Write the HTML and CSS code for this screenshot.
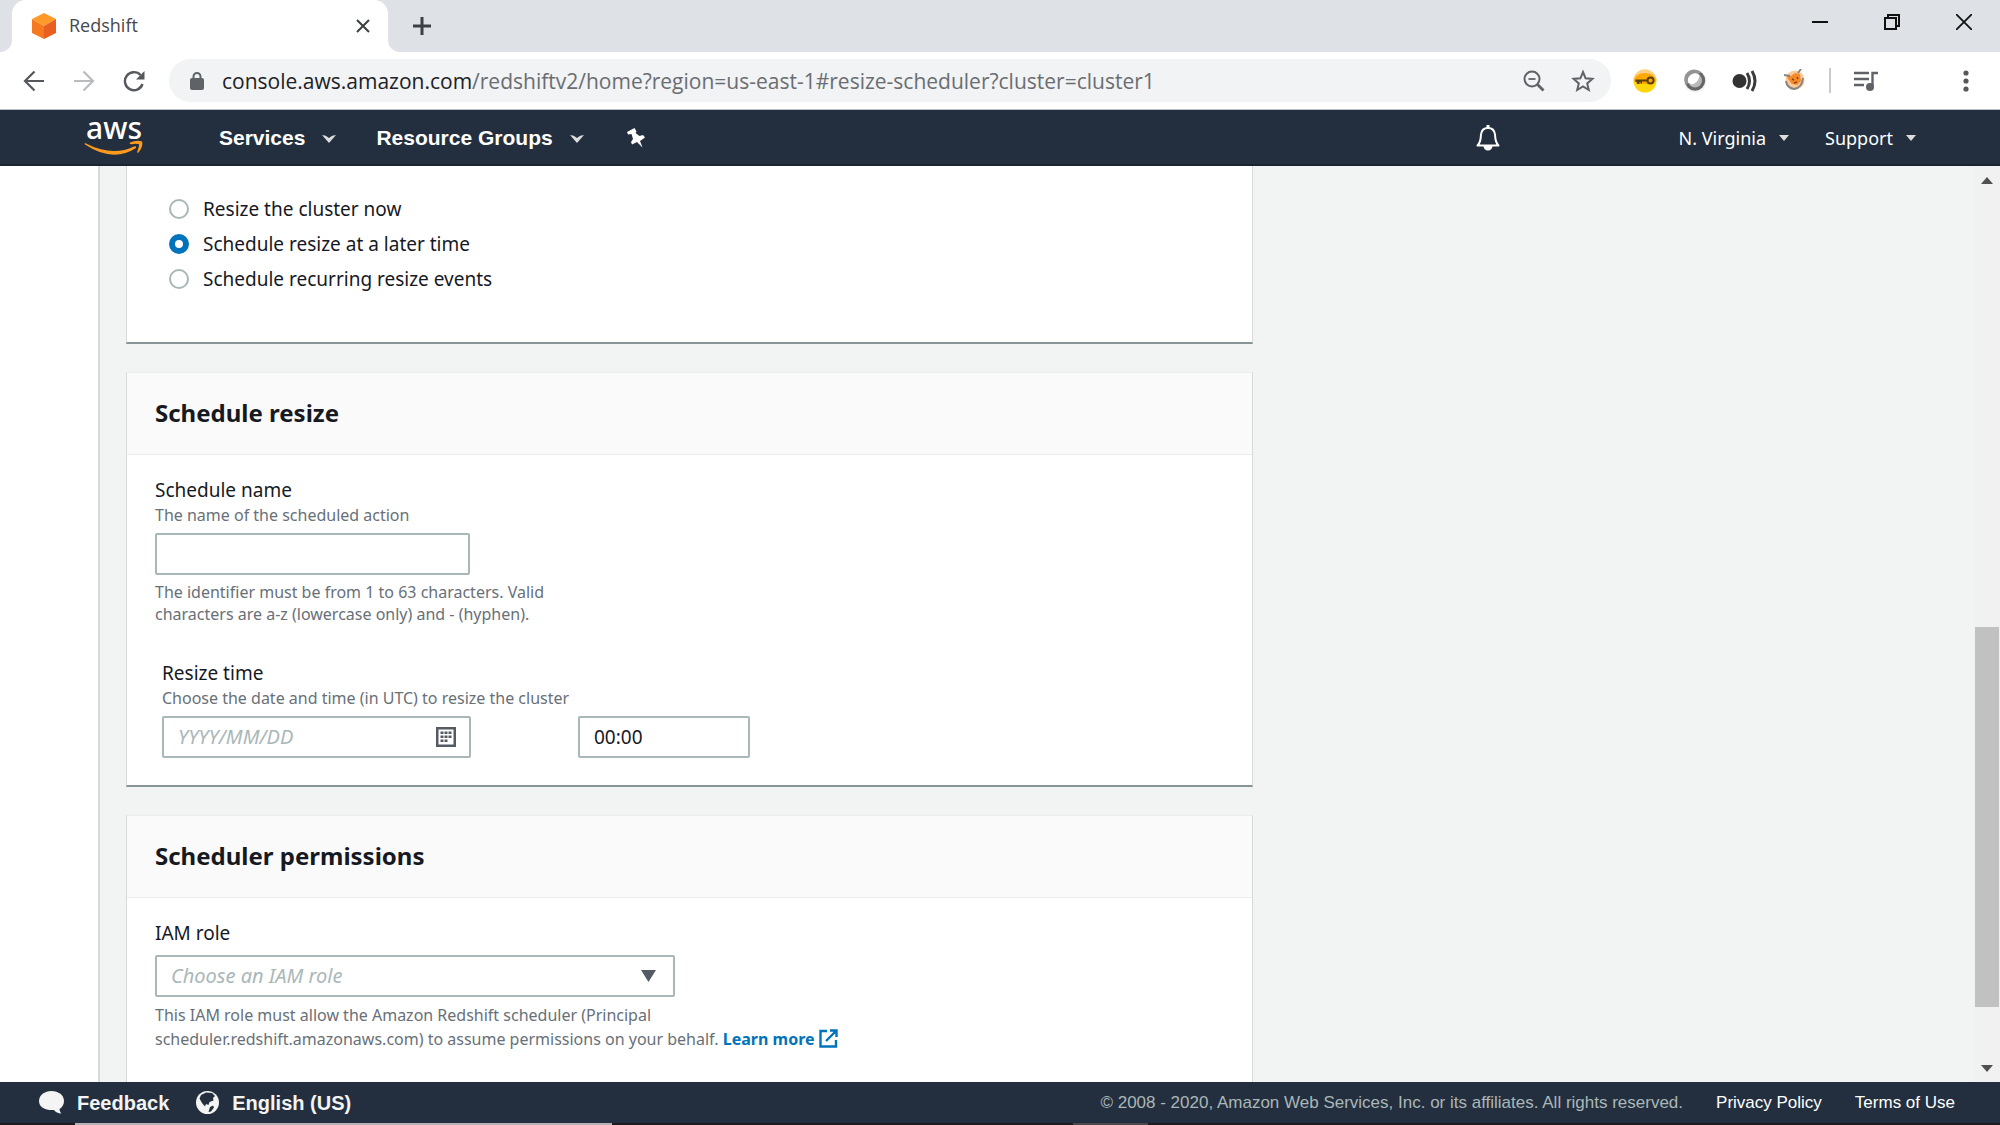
FILE: index.html
```html
<!DOCTYPE html>
<html lang="en">
<head>
<meta charset="utf-8">
<title>Redshift</title>
<link rel="stylesheet" href="styles.css">
</head>
<body>
<div class="tabstrip">
  <div class="tab-edge"></div>
  <div class="tab">
    <svg class="favicon" width="26" height="26" viewBox="0 0 26 26"><path fill="#ff9a28" d="M13 0l12 6-12 7L1 6z"/><path fill="#f4791f" d="M1 6l12 7v13L1 20z"/><path fill="#e95f1f" d="M25 6l-12 7v13l12-6z"/></svg>
    <span class="tab-title">Redshift</span>
    <button class="icon-btn" aria-label="Close tab"><svg width="14" height="14" viewBox="0 0 14 14" fill="none" stroke="#3c4043" stroke-width="2"><path d="M1 1l12 12M13 1L1 13"/></svg></button>
  </div>
  <div class="tab-rest">
    <button class="icon-btn new-tab" aria-label="New tab"><svg width="18" height="18" viewBox="0 0 18 18" fill="none" stroke="#3c4043" stroke-width="3"><path d="M9 0v18M0 9h18"/></svg></button>
    <div class="window-controls">
      <button class="icon-btn" aria-label="Minimize"><svg width="16" height="16" viewBox="0 0 16 16"><path stroke="#111" stroke-width="2" d="M0 8h16"/></svg></button>
      <button class="icon-btn" aria-label="Restore"><svg width="16" height="16" viewBox="0 0 16 16" fill="none" stroke="#111" stroke-width="2"><path d="M1 4h11v11H1zM4 4V1h11v11h-3"/></svg></button>
      <button class="icon-btn" aria-label="Close window"><svg width="16" height="16" viewBox="0 0 16 16" stroke="#111" stroke-width="1.8"><path d="M0 0l16 16M16 0L0 16"/></svg></button>
    </div>
  </div>
</div>

<div class="toolbar">
  <button class="icon-btn" aria-label="Back"><svg width="22" height="22" viewBox="0 0 22 22" fill="none" stroke="#55585c" stroke-width="2.2"><path d="M21 11H2M11.500 1.500L2 11l9.500 9.500"/></svg></button>
  <button class="icon-btn" aria-label="Forward"><svg width="22" height="22" viewBox="0 0 22 22" fill="none" stroke="#b9bbbe" stroke-width="2.200"><path d="M1 11h19M10.500 1.500L20 11l-9.500 9.500"/></svg></button>
  <button class="icon-btn" aria-label="Reload"><svg width="22" height="22" viewBox="0 0 22 22"><path fill="none" stroke="#55585c" stroke-width="2.400" d="M19.500 14A9 9 0 1 1 17.500 5"/><path fill="#55585c" d="M21.500 1v8.500H13z"/></svg></button>
  <div class="omnibox">
    <svg width="14" height="18" viewBox="0 0 14 18"><rect x="0" y="6" width="14" height="12" rx="2" fill="#5f6368"/><path d="M3.500 7V4.500a3.500 3.500 0 0 1 7 0V7" fill="none" stroke="#5f6368" stroke-width="2"/></svg>
    <div class="url"><span class="url-host">console.aws.amazon.com</span>/redshiftv2/home?region=us-east-1#resize-scheduler?cluster=cluster1</div>
    <button class="icon-btn" aria-label="Zoom"><svg width="22" height="22" viewBox="0 0 22 22" fill="none" stroke="#5f6368"><circle cx="9" cy="9" r="7.500" stroke-width="2"/><path stroke-width="2.800" d="M14.500 14.500l6 6"/><path stroke-width="1.800" d="M5.500 9h7"/></svg></button>
    <button class="icon-btn" aria-label="Bookmark"><svg width="24" height="24" viewBox="0 0 24 24" fill="none" stroke="#5f6368" stroke-width="2"><path d="M12 3l2.600 6.300 6.800.6-5.200 4.500 1.600 6.600L12 17.500 6.200 21l1.600-6.600L2.600 9.900l6.800-.6z"/></svg></button>
  </div>
  <div class="extensions">
    <button class="icon-btn" aria-label="Key extension"><svg width="24" height="24" viewBox="0 0 24 24"><circle cx="12" cy="12" r="11.500" fill="#ffd60a"/><path d="M.5 12a11.500 11.500 0 0 1 23 0z" fill="#fdd08a"/><path d="M1 12a11 8 0 0 1 22 0l-3 3H4z" fill="#fba905"/><circle cx="17.500" cy="11.500" r="3" fill="none" stroke="#5a4109" stroke-width="2"/><path d="M14 10.500v2H9v2H7.500v-1.500h-1V15H4v-2H2.500v-2.500z" fill="#5a4109"/></svg></button>
    <button class="icon-btn" aria-label="Ring extension"><svg width="24" height="24" viewBox="0 0 24 24"><circle cx="12" cy="12" r="11.500" fill="#f4f4f4"/><circle cx="12" cy="11.500" r="10.200" fill="#666"/><path d="M3 16A10 10 0 0 1 18 3z" fill="#949494"/><circle cx="12" cy="11.500" r="7" fill="#b9b9b9"/><path d="M5.500 14A7 7 0 0 1 16.500 6q-.5 7-7 9.500z" fill="#fff"/></svg></button>
    <button class="icon-btn" aria-label="Sound extension"><svg width="26" height="22" viewBox="0 0 26 22" fill="none" stroke="#3b3b3b" stroke-width="3"><circle cx="7.500" cy="11" r="7" fill="#333" stroke="none"/><path d="M15 3q5 8 0 16M20 1q6 10 0 20"/></svg></button>
    <button class="icon-btn" aria-label="Fox extension"><svg width="24" height="24" viewBox="0 0 24 24"><circle cx="12" cy="11" r="9.500" fill="#fcc99a"/><path fill="#f68a2a" d="M4 7l4 0 4-3 5 1 1 7-4 4-5-1-4-5z"/><path d="M1 6l6 1M15 4l3-4M3 12q1 7 8 8 8-1 9-11" fill="none" stroke="#858585" stroke-width="2"/><path d="M9 10l2 1M14 8l1 2M11 14l3-1" stroke="#8c4412" stroke-width="1.500"/></svg></button>
  </div>
  <div class="toolbar-divider"></div>
  <button class="icon-btn" aria-label="Media controls"><svg width="26" height="22" viewBox="0 0 26 22" fill="none" stroke="#5f6368" stroke-width="2.400"><path d="M1 3h15M1 9h15M1 15h10M19.500 17V3H25"/><circle cx="17" cy="17" r="4" fill="#5f6368" stroke="none"/></svg></button>
  <button class="icon-btn browser-menu" aria-label="Browser menu"><svg width="6" height="22" viewBox="0 0 6 22" fill="#55585c"><circle cx="3" cy="3" r="2.600"/><circle cx="3" cy="11" r="2.600"/><circle cx="3" cy="19" r="2.600"/></svg></button>
</div>

<header class="aws-nav">
  <a class="aws-logo" href="#"><span class="aws-word">aws</span><svg width="60" height="16" viewBox="0 0 60 16"><path fill="#ff9a1e" d="M1 3Q28 17 50 6.500Q52.500 5.500 52 8Q29 23 1 4.500Q.5 3.500 1 3z"/><path fill="#ff9a1e" d="M46 2.500Q53-.5 58 1.500Q59.500 6 54.500 12.500Q52.500 13.500 53.500 11Q55.500 6 55 4.200Q52 3.500 47.500 4.200Q45 4 46 2.500z"/></svg></a>
  <button class="nav-main nav-services">Services <svg width="14" height="9" viewBox="0 0 14 9"><path d="M0 1l7 8 7-8q-4 0-7 3Q4 1 0 1z" fill="#ddd"/></svg></button>
  <button class="nav-main nav-groups">Resource Groups <svg width="14" height="9" viewBox="0 0 14 9"><path d="M0 1l7 8 7-8q-4 0-7 3Q4 1 0 1z" fill="#ddd"/></svg></button>
  <button class="icon-btn nav-pin" aria-label="Pin"><svg width="18" height="20" viewBox="0 0 18 20"><path fill="#fff" d="M7.500 0l2 3.500-1 1.500 4 3 3.500-1 2 2.500-5 3.500 2.500 6.500-5.500-5.500-5 2.500-1-2.500 2-3L4.500 6 1 6.500 0 4z"/></svg></button>
  <div class="nav-right">
    <button class="icon-btn" aria-label="Notifications"><svg width="24" height="26" viewBox="0 0 24 26"><path fill="none" stroke="#fff" stroke-width="2" stroke-linejoin="round" d="M1.500 20.500C5 17 4.500 14 5 9.500 5.500 5 8.500 3 12 3s6.500 2 7 6.500c.5 4.500 0 7.500 3.500 11z"/><path fill="#fff" d="M10.500 0h3v3h-3zM7.500 21h9a4.500 4.500 0 0 1-9 0z"/></svg></button>
    <button class="nav-small nav-region">N. Virginia <svg width="10" height="6" viewBox="0 0 10 6"><path d="M0 0h10L5 6z" fill="#ddd"/></svg></button>
    <button class="nav-small">Support <svg width="10" height="6" viewBox="0 0 10 6"><path d="M0 0h10L5 6z" fill="#ddd"/></svg></button>
  </div>
</header>

<div class="viewport">
  <aside class="side"></aside>
  <main class="content">
    <section class="card card-first">
      <label class="radio-row"><input type="radio" name="when">Resize the cluster now</label>
      <label class="radio-row"><input type="radio" name="when" checked>Schedule resize at a later time</label>
      <label class="radio-row"><input type="radio" name="when">Schedule recurring resize events</label>
    </section>

    <section class="card">
      <h2 class="card-title">Schedule resize</h2>
      <div class="card-body">
        <div class="field">
          <label class="label" for="name">Schedule name</label>
          <p class="desc">The name of the scheduled action</p>
          <input class="control name-input" id="name" type="text">
          <p class="hint hint-name">The identifier must be from 1 to 63 characters. Valid characters are a-z (lowercase only) and - (hyphen).</p>
        </div>
        <div class="time-fields">
          <div class="field">
            <label class="label" for="date">Resize time</label>
            <p class="desc">Choose the date and time (in UTC) to resize the cluster</p>
            <div class="date-wrap">
              <input class="control" id="date" type="text" placeholder="YYYY/MM/DD">
              <button class="icon-btn calendar" aria-label="Open calendar"><svg width="20" height="20" viewBox="0 0 20 20"><path fill="none" stroke="#545b64" stroke-width="2.500" d="M1.250 1.250h17.500v17.500H1.250z"/><path fill="#545b64" d="M4.500 4.500h3v2.500h-3zM8.500 4.500h3v2.500h-3zM12.500 4.500h3v2.500h-3zM4.500 8.500h3V11h-3zM8.500 8.500h3V11h-3zM12.500 8.500h3V11h-3zM4.500 12.500h3V15h-3zM8.500 12.500h3V15h-3z"/></svg></button>
            </div>
          </div>
          <input class="control" type="text" value="00:00" aria-label="Time">
        </div>
      </div>
    </section>

    <section class="card">
      <h2 class="card-title">Scheduler permissions</h2>
      <div class="card-body">
        <div class="field">
          <label class="label" for="role">IAM role</label>
          <div class="select-wrap">
            <select class="control" id="role"><option>Choose an IAM role</option></select>
            <svg class="select-caret" width="15" height="12" viewBox="0 0 15 12"><path d="M0 0h15L7.500 12z" fill="#545b64"/></svg>
          </div>
          <p class="hint hint-role">This IAM role must allow the Amazon Redshift scheduler (Principal scheduler.redshift.amazonaws.com) to assume permissions on your behalf. <a class="learn" href="#">Learn more <svg width="19" height="19" viewBox="0 0 19 19" fill="none" stroke="#0073bb" stroke-width="2.400"><path d="M8 2H1.500v15.500h15.500V11M11 1.500h6.500V8M17 2L7 12"/></svg></a></p>
        </div>
      </div>
    </section>
  </main>
  <div class="scrollbar">
    <div class="scroll-arrow"><svg width="12" height="7" viewBox="0 0 12 7"><path d="M0 7h12L6 0z" fill="#505050"/></svg></div>
    <div class="scroll-before"></div>
    <div class="scroll-thumb"></div>
    <div class="scroll-after"></div>
    <div class="scroll-arrow"><svg width="12" height="7" viewBox="0 0 12 7"><path d="M0 0h12L6 7z" fill="#505050"/></svg></div>
  </div>
</div>

<footer class="aws-footer">
  <button class="foot-btn"><svg width="25" height="23" viewBox="0 0 25 23"><path fill="#f4f4f4" d="M12.500 0C19.500 0 25 4.300 25 10c0 3.800-2 6.500-4.500 8 .2 2 1 3.500 2 4.500-3.500 0-6-1.500-7.500-3.500C6.500 19.500 0 16.500 0 10 0 4.300 5.500 0 12.500 0z"/></svg>Feedback</button>
  <button class="foot-btn foot-lang"><svg width="23" height="23" viewBox="0 0 23 23"><circle cx="11.500" cy="11.500" r="11.500" fill="#f4f4f4"/><path fill="#232f3e" d="M5 4l5-2.500 6 .5 3 3-2 2 .5 2.500-4 1.500-1 3-2.500-1-1 2.500L6 12 3.500 7.500zM14 16l3-1.500 1 2-3 4-2.500.5z"/></svg>English (US)</button>
  <span class="copyright">© 2008 - 2020, Amazon Web Services, Inc. or its affiliates. All rights reserved.</span>
  <a class="foot-link" href="#">Privacy Policy</a>
  <a class="foot-link" href="#">Terms of Use</a>
</footer>
<div class="taskbar"><div class="task-a"></div><div class="task-b"></div></div>
</body>
</html>
```
FILE: styles.css
```css
* { box-sizing: border-box; }

body {
  margin: 0;
  height: 100vh;
  display: flex;
  flex-direction: column;
  overflow: hidden;
  background: #fff;
  color: #16191f;
  font: 19px/28px "Noto Sans", "Open Sans", sans-serif;
}

button, input, select { font: inherit; color: inherit; }
button { background: none; border: 0; padding: 0; }
h2, p { margin: 0; }
svg { display: block; flex: none; }
a { text-decoration: none; }

.icon-btn {
  display: flex;
  align-items: center;
  justify-content: center;
  flex: none;
}

/* Browser tabs */
.tabstrip { display: flex; height: 52px; flex: none; background: #fff; }
.tab-edge { width: 12px; background: #dee1e6; border-bottom-right-radius: 12px; }
.tab {
  width: 376px;
  display: flex;
  align-items: center;
  padding: 0 18px 0 19px;
  background: linear-gradient(#dee1e6 14px, #fff 14px);
  position: relative;
}
.tab::before {
  content: "";
  position: absolute;
  inset: 0;
  background: #fff;
  border-radius: 14px 14px 0 0;
}
.tab > * { position: relative; }
.tab-title {
  flex: 1;
  padding: 0 0 2px 12px;
  color: #45484c;
  font: 18px/24px "Open Sans", sans-serif;
}
.tab-rest {
  flex: 1;
  display: flex;
  align-items: center;
  justify-content: space-between;
  background: #dee1e6;
  border-bottom-left-radius: 12px;
  padding: 0 28px 0 25px;
}
.window-controls { display: flex; gap: 56px; padding-bottom: 8px; }

/* Address bar */
.toolbar {
  display: flex;
  align-items: center;
  flex: none;
  height: 58px;
  padding: 0 19px;
  border-bottom: 1px solid #bcc0c5;
}
.toolbar > .icon-btn { width: 30px; margin-right: 20px; }
.omnibox {
  flex: 1;
  height: 43px;
  display: flex;
  align-items: center;
  padding: 0 16px 0 21px;
  border-radius: 22px;
  background: #f1f3f4;
}
.omnibox .icon-btn { margin-left: 26px; }
.url {
  flex: 1;
  padding-left: 18px;
  color: #6a6d71;
  white-space: nowrap;
  font: 21px/28px "Open Sans", sans-serif;
}
.url-host { color: #202124; }
.extensions { display: flex; gap: 26px; padding: 0 22px; }
.extensions .icon-btn { width: 24px; }
.toolbar-divider { width: 2px; height: 25px; margin-right: 20px; background: #c8cace; }
.toolbar > .browser-menu { margin: 0 0 0 50px; }

/* Console navigation */
.aws-nav {
  display: flex;
  align-items: center;
  flex: none;
  height: 56px;
  padding: 2px 84px 0;
  background: #232f3e;
  border-bottom: 2px solid #1a2430;
  color: #fff;
}
.aws-logo { display: flex; flex-direction: column; align-items: center; width: 60px; padding-bottom: 4px; color: #fff; }
.aws-word { font: 500 30px/24px "Noto Sans", sans-serif; height: 24px; }
.nav-main {
  display: flex;
  align-items: center;
  gap: 17px;
  font: bold 21px/28px "Liberation Sans", Arial, sans-serif;
}
.nav-services { margin-left: 75px; }
.nav-groups { margin-left: 40px; }
.nav-pin { margin-left: 43px; }
.nav-right { display: flex; align-items: center; margin-left: auto; }
.nav-small { display: flex; align-items: center; gap: 13px; font-size: 18px; }
.nav-region { margin: 0 36px 0 179px; }

/* Page area */
.viewport { flex: 1; min-height: 0; display: flex; overflow: hidden; background: #f2f3f3; }
.side { width: 100px; flex: none; background: #fff; border-right: 2px solid #d5dbdb; }
.content {
  flex: 1;
  display: flex;
  flex-direction: column;
  gap: 28px;
  padding-left: 26px;
}
.card {
  width: 100%;
  max-width: 1127px;
  flex: none;
  background: #fff;
  border: 1px solid #d5dbdb;
  border-top-color: #eaeded;
  border-bottom: 2px solid #879596;
}
.card-first { padding: 29px 42px 49px; border-top: 0; display: flex; flex-direction: column; gap: 7px; }
.card:last-child { min-height: 300px; }
.radio-row { display: flex; align-items: center; gap: 14px; }
.radio-row input {
  appearance: none;
  width: 20px;
  height: 20px;
  margin: 0;
  border: 2px solid #aab7b8;
  border-radius: 50%;
  background: #fff;
}
.radio-row input:checked { border: 6px solid #0073bb; }
.card-title {
  padding: 23px 28px 25px;
  font-size: 24px;
  line-height: 33px;
  background: #fafafa;
  border-bottom: 1px solid #eaeded;
}
.card-body { padding: 22px 28px 27px; }
.label { display: block; line-height: 26px; }
.desc, .hint { font-size: 16px; color: #687078; }
.desc { line-height: 24px; margin-bottom: 6px; white-space: nowrap; }
.hint { line-height: 22px; margin-top: 6px; }
.hint-name { max-width: 414px; }
.hint-role { max-width: 720px; line-height: 24px; }
.control {
  display: block;
  width: 100%;
  height: 42px;
  padding: 0 14px;
  border: 2px solid #aab7b8;
  border-radius: 2px;
  background: #fff;
}
.control::placeholder { color: #aab7b8; font-style: italic; font-size: 20px; opacity: 1; }
.name-input { max-width: 315px; }
.time-fields {
  display: grid;
  grid-template-columns: 416px 172px;
  align-items: end;
  padding: 35px 0 0 7px;
}
.date-wrap { position: relative; max-width: 309px; }
.calendar { position: absolute; right: 15px; top: 11px; }
.select-wrap { position: relative; max-width: 520px; margin-top: 9px; }
.select-wrap .control { appearance: none; color: #aab7b8; font-style: italic; font-size: 20px; }
.select-caret { position: absolute; right: 19px; top: 15px; pointer-events: none; }
.learn { color: #0073bb; font-weight: bold; white-space: nowrap; }
.learn svg { display: inline-block; vertical-align: -3px; }

.scrollbar { width: 26px; flex: none; display: flex; flex-direction: column; align-items: center; background: #f1f1f1; }
.scroll-arrow { height: 28px; flex: none; display: flex; align-items: center; }
.scroll-before { flex: 434; }
.scroll-thumb { flex: 381; width: 24px; background: #c1c1c1; }
.scroll-after { flex: 47; }

/* Footer */
.aws-footer {
  display: flex;
  align-items: center;
  flex: none;
  height: 41px;
  padding: 0 45px 0 39px;
  background: #232f3e;
  color: #fff;
  font: 17px/24px "Liberation Sans", Arial, sans-serif;
}
.foot-btn { display: flex; align-items: center; gap: 13px; font-weight: bold; font-size: 20px; color: #f4f4f4; }
.foot-lang { margin-left: 27px; }
.copyright { margin-left: auto; color: #aab7b8; }
.foot-link { margin-left: 33px; color: #fff; }

.taskbar { display: flex; flex: none; height: 2px; padding-left: 75px; background: #1c1c1e; }
.task-a { width: 537px; background: #b4b4b6; }
.task-b { width: 75px; margin-left: 461px; background: #4a4a4c; }
```
